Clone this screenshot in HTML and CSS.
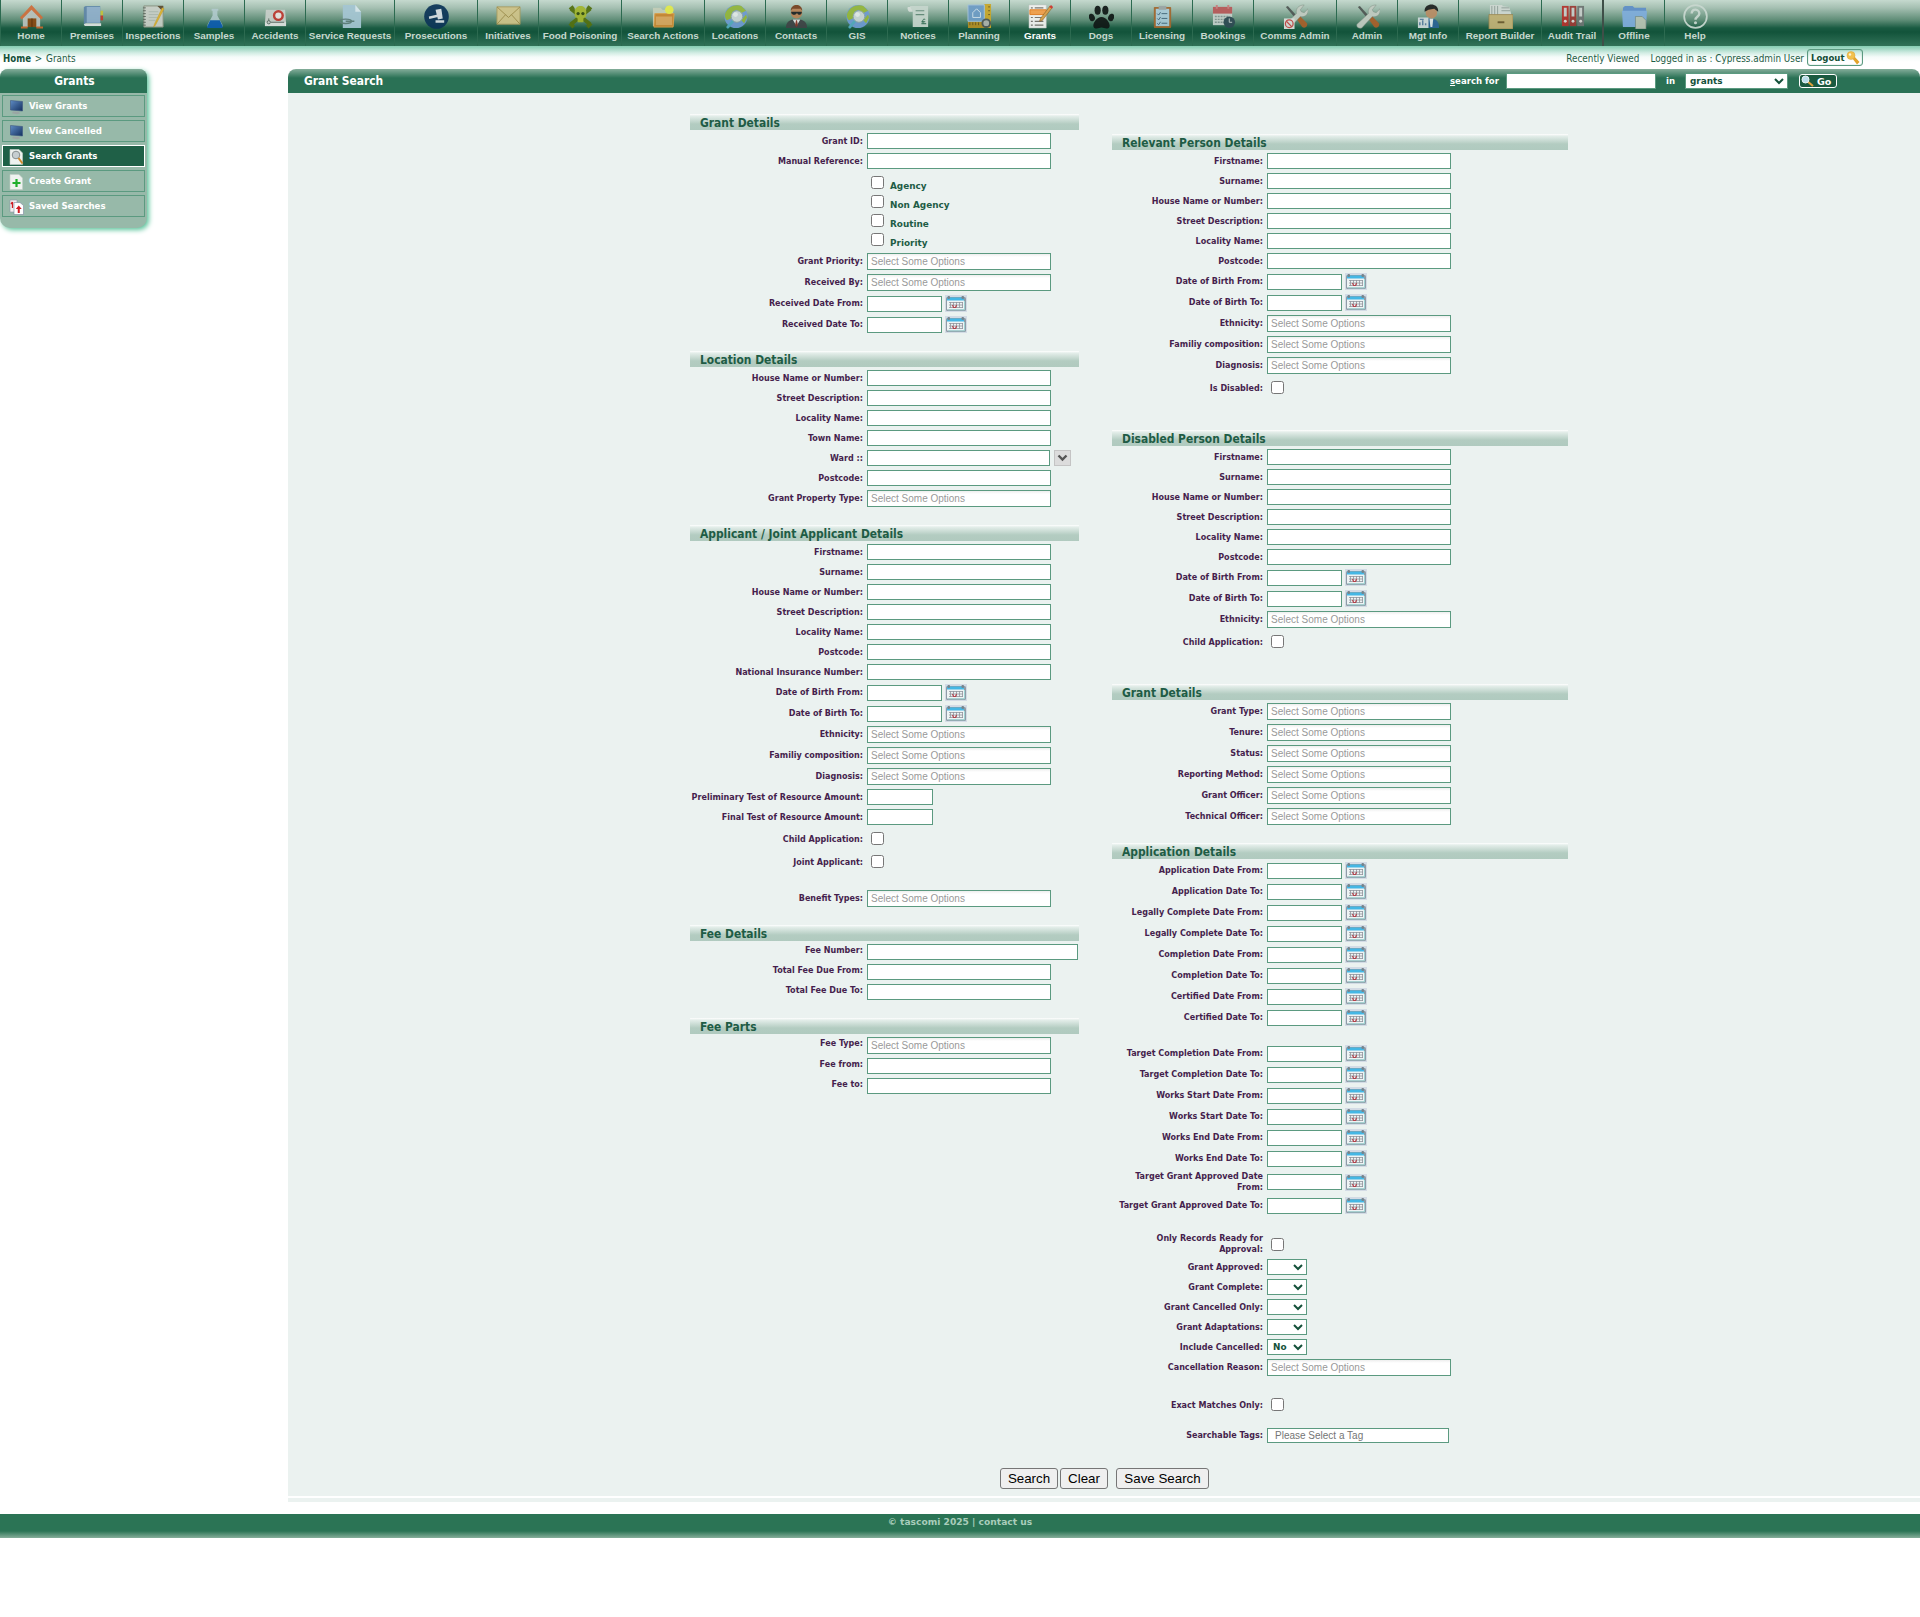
FILE: index.html
```html
<!DOCTYPE html>
<html lang="en">
<head>
<meta charset="utf-8">
<title>Grant Search</title>
<link rel="stylesheet" href="styles.css">
</head>
<body>
<svg class="defs" width="0" height="0">
<defs>
<linearGradient id="screen" x1="0" y1="0" x2="1" y2="1"><stop offset="0" stop-color="#5f8cc4"/><stop offset="1" stop-color="#14305f"/></linearGradient>
<symbol id="cal" viewBox="0 0 22 17">
<rect width="22" height="17" fill="#d3dbe5"/>
<rect x="1" y="2" width="20" height="14" rx="1.500" fill="#8f9ca6"/>
<rect x="2" y="3" width="17" height="11.500" fill="#eef3f4"/>
<rect x="2" y="2.500" width="17" height="3" fill="#45b7e4"/>
<rect x="2.500" y="1" width="2.500" height="3" rx="1" fill="#77848c"/><rect x="16.500" y="1" width="2.500" height="3" rx="1" fill="#77848c"/>
<path d="M4 7.500h14M4 10h14M4 12.500h14M5.500 7v6M8.500 7v6M11.500 7v6M14.500 7v6M17.500 7v6" stroke="#8f949c" stroke-width=".8"/>
<path d="M7.500 10l1 2.500h2l1-2.500" fill="none" stroke="#b5404a" stroke-width="1.100"/>
<path d="M19.500 6v8.800H3" fill="none" stroke="#9ed3d3"/>
</symbol>
<symbol id="globe" viewBox="0 0 26 26">
<circle cx="13.500" cy="13" r="12" fill="#6f9bd2"/><path d="M2 11C4 3 13 0 19 2l5 5-6 3-4-4-4 2-2 7-4 2c-2-2-2-4-2-6zM24 11l1 3-3 6-3-3z" fill="#93b63b"/>
<path d="M10 18l-5 6" stroke="#54aac0" stroke-width="3" stroke-linecap="round"/><circle cx="14.500" cy="13" r="6" fill="#c9d6d6" stroke="#8fa5a6"/><circle cx="13" cy="11" r="2.500" fill="#e4ebea"/>
</symbol>
<symbol id="tools" viewBox="0 0 26 26">
<path d="M3 3l2-1 10 11-2 2z" fill="#4f5653"/><path d="M13 14l3-3 9 9c1 3-2 6-5 4z" fill="#a8602a"/>
<path d="M2 21L14 10c-1-5 2-9 8-9l-4 5 1 2 3 1 4-4c1 6-3 9-8 8L7 25c-3 1-6-1-5-4z" fill="#c2ccc2" stroke="#7d8c82" stroke-width=".5"/>
</symbol>
<symbol id="monitor" viewBox="0 0 15 16">
<path d="M1.500 1.500l12 1v9.500l-12-1z" fill="url(#screen)" stroke="#3c557f" stroke-width=".6"/><path d="M4 12.500h6l1 2-3 .8-5-1z" fill="#9ba5a4"/>
</symbol>
<symbol id="page" viewBox="0 0 15 16"><path d="M1 .5h9l3.500 3.500v11.500H1z" fill="#eef2ef" stroke="#c3cec8" stroke-width=".6"/></symbol>
</defs>
</svg>

<nav class="nav">
<a class="nav-item"><svg class="nav-icon" viewBox="0 0 26 26"><path d="M4 13L13 4l9 9v11H4z" fill="#b9c2bd"/><path d="M1 14L13 1l12 13-2 2L13 6 3 16z" fill="#cf6f3c"/><rect x="9" y="15" width="9" height="9" fill="#8a4a12"/><path d="M13.500 15v9" stroke="#5d2e08"/><path d="M2 24.500h7M18 24.500h7" stroke="#c9682f" stroke-width="2"/></svg>Home</a>
<a class="nav-item"><svg class="nav-icon" viewBox="0 0 26 26"><path d="M21 7h3v5h-3z" fill="#c2c23a"/><path d="M21 12h3v5h-3z" fill="#c23a2a"/><path d="M4 3l2-1h15v18H6l-2 1z" fill="#5f86a8"/><path d="M4 21l2-1h16v3H6c-1 0-2-1-2-2z" fill="#dfe4e2"/><rect x="7" y="3" width="14" height="16.500" fill="#8fafcb"/></svg>Premises</a>
<a class="nav-item"><svg class="nav-icon" viewBox="0 0 26 26"><path d="M3 2h20v22H3z" fill="#c9cfc7" stroke="#87917f"/><path d="M17 2h6v6z" fill="#5b4b30"/><path d="M8 8h10M8 11h10M8 14h9M8 17h7" stroke="#a9b3aa" stroke-width=".8"/><path d="M2 4h3M2 7h3M2 10h3M2 13h3M2 16h3M2 19h3M2 22h3" stroke="#5c665d"/><path d="M24 5l-9 17-2 2 1-3 8-17z" fill="#e2b42f" stroke="#c59a28" stroke-width=".5"/></svg>Inspections</a>
<a class="nav-item"><svg class="nav-icon" viewBox="0 0 26 26"><path d="M10 5h7v2h-1v5l5 9c1 2 0 4-2 4H8c-2 0-3-2-2-4l5-9V7h-1z" fill="#b4ccd0" opacity=".9"/><path d="M8.500 17h10l2.500 5c1 2 0 3-1 3H7c-2 0-2-1-1-3z" fill="#0d5cae"/></svg>Samples</a>
<a class="nav-item"><svg class="nav-icon" viewBox="0 0 26 26"><path d="M3 6h20l1 14H2z" fill="#c8cfca"/><path d="M2 19h22v4H2z" fill="#e0e4e1"/><circle cx="16" cy="12" r="4.500" fill="#e9e5e2" stroke="#c03a32" stroke-width="2.500"/><path d="M8 19h14M6 15v3" stroke="#5f6d66"/><circle cx="6" cy="19" r="1.700" fill="#c8cfca" stroke="#5f6d66"/></svg>Accidents</a>
<a class="nav-item wide-xl"><svg class="nav-icon" viewBox="0 0 26 26"><path d="M5 1h13l6 7v17H5z" fill="#a5c6d3"/><path d="M18 1v7h6z" fill="#d8e7ec"/><path d="M2 18c0-3 12-3 12 0s-12 3-12 0zM8 18h9" fill="none" stroke="#5f7f7c" stroke-width="1.500"/></svg>Service Requests</a>
<a class="nav-item wide"><svg class="nav-icon" viewBox="0 0 26 26"><circle cx="13" cy="13" r="12.800" fill="#0c3558"/><path d="M12 6l6-1 1.500 10-5 1z" fill="#d5dde2"/><path d="M5 13l9-2 .5 2.500-9 2zM12 17h9v2.500h-9z" fill="#d5dde2"/></svg>Prosecutions</a>
<a class="nav-item"><svg class="nav-icon" viewBox="0 0 26 26"><path d="M1 3h24v18H1z" fill="#d0c489" stroke="#a99c5f"/><path d="M1 3l12 11L25 3M1 21l9-10M25 21l-9-10" fill="none" stroke="#a08f4c"/></svg>Initiatives</a>
<a class="nav-item wide"><svg class="nav-icon" viewBox="0 0 26 26"><path d="M3 5l20 16M23 5L3 21M2 6l4-3M24 6l-4-3M2 20l4 4M24 20l-4 4" stroke="#53700f" stroke-width="4"/><path d="M7 8c0-8 12-8 12 0v5l-3 2v4h-6v-4l-3-2z" fill="#a2b62e"/><circle cx="10.500" cy="10" r="1.700" fill="#314a0e"/><circle cx="15.500" cy="10" r="1.700" fill="#314a0e"/></svg>Food Poisoning</a>
<a class="nav-item wide"><svg class="nav-icon" viewBox="0 0 26 26"><path d="M2 4h8l2 2h11v17H2z" fill="#c4ceb8"/><path d="M4 10h20l-1 14H3z" fill="#c9862f" stroke="#dfa04a"/><path d="M5 13h17v9H5z" fill="#dba75e"/><circle cx="19" cy="6" r="4.500" fill="#e9ee3f" opacity=".9"/></svg>Search Actions</a>
<a class="nav-item"><svg class="nav-icon"><use href="#globe"/></svg>Locations</a>
<a class="nav-item"><svg class="nav-icon" viewBox="0 0 26 26"><path d="M2 25c0-6 3-8 7-9h8c4 1 7 3 7 9z" fill="#3f4446"/><path d="M9 16l4 7 4-7z" fill="#dfe3e0"/><path d="M12.500 17h1l1 5-1.500 2-1.500-2z" fill="#873529"/><circle cx="13" cy="9" r="6" fill="#b78357"/><path d="M7 7c0-8 12-8 12 0l-2-2H9z" fill="#774220"/><path d="M7.500 8h11v1c-1 3-4 3-5 0-1 3-5 3-6 0z" fill="#1d2425"/></svg>Contacts</a>
<a class="nav-item"><svg class="nav-icon"><use href="#globe"/></svg>GIS</a>
<a class="nav-item"><svg class="nav-icon" viewBox="0 0 26 26"><path d="M2 3h5v5H4c-2 0-3-4-2-5z" fill="#d5ded8"/><path d="M4 2h19v22H7V8z" fill="#c6d6cd"/><path d="M10 7h9M10 11h9" stroke="#648a79" stroke-width="1.200"/><path d="M20 16c-3-1-3 2-2 4m-2-1.500h4m-4 2h5" fill="none" stroke="#29664c"/></svg>Notices</a>
<a class="nav-item"><svg class="nav-icon" viewBox="0 0 26 26"><path d="M18 0h7v25h-7z" fill="#c9a72a"/><path d="M1 18h18v7H1z" fill="#b28f25"/><path d="M1 1h17v17H1z" fill="#6d9cc6" stroke="#a7c4da"/><path d="M6 9l4-4 4 4v5H6z" fill="none" stroke="#d0e1ec"/><path d="M3 19v3M6 19v3M9 19v3M12 19v3M22 3h2M22 7h2M22 11h2" stroke="#6f5a1c"/><circle cx="20" cy="20" r="4" fill="#aeb3ad" stroke="#505956" stroke-width="2"/></svg>Planning</a>
<a class="nav-item active"><svg class="nav-icon" viewBox="0 0 26 26"><path d="M1 1h18v24H1z" fill="#f4f4f2" stroke="#c2c2c0" stroke-width=".5"/><path d="M2 6h17v5H2z" fill="#f5a04a" stroke="#e67c1c"/><path d="M3 4h2M7 4h9M3 14h2M7 14h9M3 18h2M7 18h9M3 22h2M7 22h9" stroke="#77736f" stroke-width="1.200"/><path d="M23 2l2 2-10 13-3 1 1-3z" fill="#dba049" stroke="#8a5a1c" stroke-width=".6"/><path d="M22 3l2-2 2 2-1 2z" fill="#d0342c"/></svg>Grants</a>
<a class="nav-item"><svg class="nav-icon" viewBox="0 0 26 26"><g fill="#101816"><ellipse cx="9" cy="6.500" rx="3.200" ry="4.800"/><ellipse cx="17" cy="6.500" rx="3.200" ry="4.800"/><ellipse cx="3" cy="14" rx="3" ry="4" transform="rotate(-20 3 14)"/><ellipse cx="23" cy="14" rx="3" ry="4" transform="rotate(20 23 14)"/><path d="M13 13.500c5 0 8.500 6 8.500 9 0 4-5 3-8.500 2-3.500 1-8.500 2-8.500-2 0-3 3.500-9 8.500-9z"/></g></svg>Dogs</a>
<a class="nav-item"><svg class="nav-icon" viewBox="0 0 26 26"><rect x="4" y="3" width="18" height="22" rx="1" fill="#a2672e"/><path d="M6 5h14v18H6z" fill="#a9cbd8"/><path d="M9 2h8v4H9z" fill="#9aa5a4"/><path d="M7.500 10l1.500 1.500 2-3M7.500 15l1.500 1.500 2-3M7.500 20l1.500 1.500 2-3M12 10h6M12 15h6M12 20h6" fill="none" stroke="#42667a"/></svg>Licensing</a>
<a class="nav-item"><svg class="nav-icon" viewBox="0 0 26 26"><path d="M2 3h20v19H2z" fill="#c4d0ca"/><path d="M2 3h20v7H2z" fill="#b75858"/><path d="M6 1v4M18 1v4" stroke="#c97b7b" stroke-width="2"/><path d="M4 13h15M4 16h15M4 19h15" stroke="#829590" stroke-width="1.500" stroke-dasharray="2 1"/><circle cx="19" cy="19" r="6" fill="#2f4b54"/><path d="M19 15v4h3" fill="none" stroke="#c4d0ca"/></svg>Bookings</a>
<a class="nav-item wide"><svg class="nav-icon" viewBox="0 0 26 26"><use href="#tools"/><path d="M1 15h11v11H1z" fill="#dbe1dc"/><circle cx="6.500" cy="20.500" r="4" fill="none" stroke="#c74a48" stroke-width="1.300"/><path d="M3.500 18l6 6" stroke="#c74a48" stroke-width="1.300"/></svg>Comms Admin</a>
<a class="nav-item"><svg class="nav-icon"><use href="#tools"/></svg>Admin</a>
<a class="nav-item"><svg class="nav-icon" viewBox="0 0 26 26"><path d="M7 25c0-8 3-10 8-10s9 2 9 10z" fill="#2c6596"/><path d="M14 15h4l-1 9h-2z" fill="#dfe8ea"/><circle cx="16" cy="9" r="6" fill="#b98d65"/><path d="M9 8c-1-10 15-10 14 0l-4-3-6 1z" fill="#1e2120"/><path d="M2 14h11v11H2z" fill="#cfdadb"/><path d="M4 22v-3M7 22v-5M10 22v-2M4 16h4" stroke="#5c80a0" stroke-width="1.500"/></svg>Mgt Info</a>
<a class="nav-item wide"><svg class="nav-icon" viewBox="0 0 26 26"><path d="M2 1h13v12H2zM14 2l8 1 3 10H14z" fill="#cfd8d2"/><path d="M4 2v9M7 2v9M10 2v9M14 4h8M14 7h9" stroke="#8f9e97"/><path d="M1 11h25v15H1z" fill="#c2b276" stroke="#99834a" stroke-width=".8"/><rect x="10" y="18" width="7" height="2" fill="#6e5c30"/></svg>Report Builder</a>
<a class="nav-item"><svg class="nav-icon" viewBox="0 0 26 26"><path d="M2 2h7v21H2z" fill="#b3322c"/><path d="M10 2h7v21h-7z" fill="#9b3a34"/><path d="M18 2h7v21h-7z" fill="#6d7472"/><path d="M4 4h3v9H4zM12 4h3v9h-3zM20 4h3v9h-3z" fill="#c6cdc9"/><circle cx="5.500" cy="18" r="1.500" fill="#d8d8d4"/><circle cx="13.500" cy="18" r="1.500" fill="#d8d8d4"/><circle cx="21.500" cy="18" r="1.500" fill="#d8d8d4"/></svg>Audit Trail</a>
<a class="nav-item offline"><svg class="nav-icon" viewBox="0 0 26 26"><path d="M1 4l2-2h8l2 2h12v19H1z" fill="#5f8fc8"/><path d="M0 7h26l-1 17H1z" fill="#7faddc"/><path d="M14 13h7l4 4v9H14z" fill="#b8c4b4" stroke="#6b7d72" stroke-width=".6"/></svg>Offline</a>
<a class="nav-item"><svg class="nav-icon" viewBox="0 0 26 26"><circle cx="13" cy="13" r="11.800" fill="none" stroke="#c9d8d0" stroke-width="1.800"/><path d="M9 10c0-6 8-5 8 0 0 3-4 3-4 6.500" fill="none" stroke="#c9d8d0" stroke-width="2.500"/><circle cx="13" cy="19.500" r="1.600" fill="#c9d8d0"/></svg>Help</a>
</nav>

<div class="topline">
<div class="crumbs"><b>Home</b> &gt; Grants</div>
<div class="user"><span>Recently Viewed</span><span>Logged in as : Cypress.admin User</span><a class="logout">Logout<svg width="15" height="15" viewBox="0 0 15 15"><path d="M7 8l2-2 5.500 6-2.500 2.500z" fill="#e3a32a"/><circle cx="6" cy="5.500" r="4" fill="#f2c14e" stroke="#d9a136" stroke-width=".5"/><circle cx="5" cy="4.500" r="1.200" fill="#fff4cf"/></svg></a></div>
</div>

<div class="main">
<aside class="side">
<h2 class="side-title">Grants</h2>
<a class="side-item"><svg><use href="#monitor"/></svg>View Grants</a>
<a class="side-item"><svg><use href="#monitor"/></svg>View Cancelled</a>
<a class="side-item current"><svg viewBox="0 0 15 16"><use href="#page"/><circle cx="7" cy="6" r="3.800" fill="#c6ced0" stroke="#868f90"/><path d="M9.500 9l4 5.500" stroke="#d08a2c" stroke-width="2"/></svg>Search Grants</a>
<a class="side-item"><svg viewBox="0 0 15 16"><use href="#page"/><path d="M7.500 5v8M3.500 9h8" stroke="#1fae2c" stroke-width="2.200"/></svg>Create Grant</a>
<a class="side-item"><svg viewBox="0 0 15 16"><path d="M1 1h7v12H1z" fill="#f4eeee" stroke="#8c94a8" stroke-width=".6"/><path d="M3.500 3v6M2 5l1.500-2" stroke="#d01c24" stroke-width="1.300"/><path d="M5 3.500h6l3.500 3v9H5z" fill="#fff" stroke="#7c86a0" stroke-width=".6"/><path d="M9.750 6.500l3 3.500h-2v4h-2v-4h-2z" fill="#d01c24"/></svg>Saved Searches</a>
</aside>

<section class="panel">
<header class="panel-head">
<h1>Grant Search</h1>
<div class="quick"><label><u>s</u>earch for</label><input class="q-input"><span class="q-in">in</span><select class="q-select"><option>grants</option></select><a class="go"><svg width="14" height="13" viewBox="0 0 14 13"><path d="M6 6l6 5" stroke="#dda13a" stroke-width="2.200"/><circle cx="4.500" cy="4.500" r="3.500" fill="#b9dcea" stroke="#e9f4f5"/></svg>Go</a></div>
</header>

<form class="form">
<div class="cols">
<div class="col left">
<h3>Grant Details</h3>
<div class="row"><label>Grant ID:</label><input class="txt"></div>
<div class="row"><label>Manual Reference:</label><input class="txt"></div>
<div class="checks">
<div class="check"><input type="checkbox"><span>Agency</span></div>
<div class="check"><input type="checkbox"><span>Non Agency</span></div>
<div class="check"><input type="checkbox"><span>Routine</span></div>
<div class="check"><input type="checkbox"><span>Priority</span></div>
</div>
<div class="row multi"><label>Grant Priority:</label><div class="chosen">Select Some Options</div></div>
<div class="row multi"><label>Received By:</label><div class="chosen">Select Some Options</div></div>
<div class="row date"><label>Received Date From:</label><input class="txt"><svg><use href="#cal"/></svg></div>
<div class="row date"><label>Received Date To:</label><input class="txt"><svg><use href="#cal"/></svg></div>

<h3>Location Details</h3>
<div class="row"><label>House Name or Number:</label><input class="txt"></div>
<div class="row"><label>Street Description:</label><input class="txt"></div>
<div class="row"><label>Locality Name:</label><input class="txt"></div>
<div class="row"><label>Town Name:</label><input class="txt"></div>
<div class="row ward"><label>Ward ::</label><input class="txt"><span class="drop"><svg width="11" height="8" viewBox="0 0 11 8"><path d="M1.500 1.500l4 4 4-4" fill="none" stroke="#555" stroke-width="2.400"/></svg></span></div>
<div class="row"><label>Postcode:</label><input class="txt"></div>
<div class="row multi"><label>Grant Property Type:</label><div class="chosen">Select Some Options</div></div>

<h3>Applicant / Joint Applicant Details</h3>
<div class="row"><label>Firstname:</label><input class="txt"></div>
<div class="row"><label>Surname:</label><input class="txt"></div>
<div class="row"><label>House Name or Number:</label><input class="txt"></div>
<div class="row"><label>Street Description:</label><input class="txt"></div>
<div class="row"><label>Locality Name:</label><input class="txt"></div>
<div class="row"><label>Postcode:</label><input class="txt"></div>
<div class="row"><label>National Insurance Number:</label><input class="txt"></div>
<div class="row date"><label>Date of Birth From:</label><input class="txt"><svg><use href="#cal"/></svg></div>
<div class="row date"><label>Date of Birth To:</label><input class="txt"><svg><use href="#cal"/></svg></div>
<div class="row multi"><label>Ethnicity:</label><div class="chosen">Select Some Options</div></div>
<div class="row multi"><label>Familiy composition:</label><div class="chosen">Select Some Options</div></div>
<div class="row multi"><label>Diagnosis:</label><div class="chosen">Select Some Options</div></div>
<div class="row money"><label>Preliminary Test of Resource Amount:</label><input class="txt"></div>
<div class="row money"><label>Final Test of Resource Amount:</label><input class="txt"></div>
<div class="row tick"><label>Child Application:</label><input type="checkbox"></div>
<div class="row tick"><label>Joint Applicant:</label><input type="checkbox"></div>
<div class="row multi spaced"><label>Benefit Types:</label><div class="chosen">Select Some Options</div></div>

<h3>Fee Details</h3>
<div class="row raised long"><label>Fee Number:</label><input class="txt"></div>
<div class="row raised"><label>Total Fee Due From:</label><input class="txt"></div>
<div class="row raised"><label>Total Fee Due To:</label><input class="txt"></div>

<h3>Fee Parts</h3>
<div class="row multi raised"><label>Fee Type:</label><div class="chosen">Select Some Options</div></div>
<div class="row raised"><label>Fee from:</label><input class="txt"></div>
<div class="row raised"><label>Fee to:</label><input class="txt"></div>
</div>

<div class="col right">
<h3>Relevant Person Details</h3>
<div class="row"><label>Firstname:</label><input class="txt"></div>
<div class="row"><label>Surname:</label><input class="txt"></div>
<div class="row"><label>House Name or Number:</label><input class="txt"></div>
<div class="row"><label>Street Description:</label><input class="txt"></div>
<div class="row"><label>Locality Name:</label><input class="txt"></div>
<div class="row"><label>Postcode:</label><input class="txt"></div>
<div class="row date"><label>Date of Birth From:</label><input class="txt"><svg><use href="#cal"/></svg></div>
<div class="row date"><label>Date of Birth To:</label><input class="txt"><svg><use href="#cal"/></svg></div>
<div class="row multi"><label>Ethnicity:</label><div class="chosen">Select Some Options</div></div>
<div class="row multi"><label>Familiy composition:</label><div class="chosen">Select Some Options</div></div>
<div class="row multi"><label>Diagnosis:</label><div class="chosen">Select Some Options</div></div>
<div class="row tick last"><label>Is Disabled:</label><input type="checkbox"></div>

<h3>Disabled Person Details</h3>
<div class="row"><label>Firstname:</label><input class="txt"></div>
<div class="row"><label>Surname:</label><input class="txt"></div>
<div class="row"><label>House Name or Number:</label><input class="txt"></div>
<div class="row"><label>Street Description:</label><input class="txt"></div>
<div class="row"><label>Locality Name:</label><input class="txt"></div>
<div class="row"><label>Postcode:</label><input class="txt"></div>
<div class="row date"><label>Date of Birth From:</label><input class="txt"><svg><use href="#cal"/></svg></div>
<div class="row date"><label>Date of Birth To:</label><input class="txt"><svg><use href="#cal"/></svg></div>
<div class="row multi"><label>Ethnicity:</label><div class="chosen">Select Some Options</div></div>
<div class="row tick last"><label>Child Application:</label><input type="checkbox"></div>

<h3>Grant Details</h3>
<div class="row multi"><label>Grant Type:</label><div class="chosen">Select Some Options</div></div>
<div class="row multi"><label>Tenure:</label><div class="chosen">Select Some Options</div></div>
<div class="row multi"><label>Status:</label><div class="chosen">Select Some Options</div></div>
<div class="row multi"><label>Reporting Method:</label><div class="chosen">Select Some Options</div></div>
<div class="row multi"><label>Grant Officer:</label><div class="chosen">Select Some Options</div></div>
<div class="row multi"><label>Technical Officer:</label><div class="chosen">Select Some Options</div></div>

<h3>Application Details</h3>
<div class="row date"><label>Application Date From:</label><input class="txt"><svg><use href="#cal"/></svg></div>
<div class="row date"><label>Application Date To:</label><input class="txt"><svg><use href="#cal"/></svg></div>
<div class="row date"><label>Legally Complete Date From:</label><input class="txt"><svg><use href="#cal"/></svg></div>
<div class="row date"><label>Legally Complete Date To:</label><input class="txt"><svg><use href="#cal"/></svg></div>
<div class="row date"><label>Completion Date From:</label><input class="txt"><svg><use href="#cal"/></svg></div>
<div class="row date"><label>Completion Date To:</label><input class="txt"><svg><use href="#cal"/></svg></div>
<div class="row date"><label>Certified Date From:</label><input class="txt"><svg><use href="#cal"/></svg></div>
<div class="row date"><label>Certified Date To:</label><input class="txt"><svg><use href="#cal"/></svg></div>
<div class="row date spaced"><label>Target Completion Date From:</label><input class="txt"><svg><use href="#cal"/></svg></div>
<div class="row date"><label>Target Completion Date To:</label><input class="txt"><svg><use href="#cal"/></svg></div>
<div class="row date"><label>Works Start Date From:</label><input class="txt"><svg><use href="#cal"/></svg></div>
<div class="row date"><label>Works Start Date To:</label><input class="txt"><svg><use href="#cal"/></svg></div>
<div class="row date"><label>Works End Date From:</label><input class="txt"><svg><use href="#cal"/></svg></div>
<div class="row date"><label>Works End Date To:</label><input class="txt"><svg><use href="#cal"/></svg></div>
<div class="row date double"><label>Target Grant Approved Date<br>From:</label><input class="txt"><svg><use href="#cal"/></svg></div>
<div class="row date"><label>Target Grant Approved Date To:</label><input class="txt"><svg><use href="#cal"/></svg></div>
<div class="row tick double spaced"><label>Only Records Ready for<br>Approval:</label><input type="checkbox"></div>
<div class="row"><label>Grant Approved:</label><select class="yn"><option></option></select></div>
<div class="row"><label>Grant Complete:</label><select class="yn"><option></option></select></div>
<div class="row"><label>Grant Cancelled Only:</label><select class="yn"><option></option></select></div>
<div class="row"><label>Grant Adaptations:</label><select class="yn"><option></option></select></div>
<div class="row"><label>Include Cancelled:</label><select class="yn"><option>No</option></select></div>
<div class="row multi"><label>Cancellation Reason:</label><div class="chosen">Select Some Options</div></div>
<div class="row tick spaced"><label>Exact Matches Only:</label><input type="checkbox"></div>
<div class="row tags"><label>Searchable Tags:</label><div class="chosen">Please Select a Tag</div></div>
</div>
</div>
<div class="buttons"><button type="button">Search</button><button type="button">Clear</button><button type="button" class="save">Save Search</button></div>
</form>
</section>
</div>

<footer class="footer">© tascomi 2025 | contact us</footer>
</body>
</html>
```
FILE: styles.css
```css
* { box-sizing: border-box; }
body { margin: 0; background: #fff; font-family: "DejaVu Sans Condensed", "DejaVu Sans", sans-serif; font-stretch: condensed; color: #1f5d46; }
.defs { position: absolute; }

/* top navigation */
.nav { display: flex; height: 46px; background: linear-gradient(#c5d9ce 0, #a4bfb1 8px, #5f8d77 20px, #1a5b42 28px, #12533a 32px, #327258 46px); }
.nav-item { width: 61px; border-left: 1px solid #2c6a50; display: flex; flex-direction: column; align-items: center; padding-top: 4px; font: bold 9.9px/12px "Liberation Sans", Arial, sans-serif; color: #c6d8ce; white-space: nowrap; }
.nav-item.wide { width: 83px; }
.nav-item.wide-xl { width: 89px; }
.nav-item.active { color: #fff; }
.nav-item.offline { width: 62px; border-left: 2px solid #3f4f48; }
.nav-icon { width: 25px; height: 25px; margin-bottom: 1px; opacity: .93; flex: none; }

/* breadcrumbs and session links */
.topline { display: flex; justify-content: space-between; height: 23px; background: linear-gradient(#86ccb2 0, #a5d9c6 3px, #d3ede4 7px, #f5fbf9 11px, #fff 16px); font-size: 9.85px; line-height: 25px; }
.crumbs { padding-left: 3px; word-spacing: 1px; }
.crumbs b { font-size: 9.6px; color: #14513a; }
.user { display: flex; padding-right: 57px; }
.user span { margin-right: 11px; }
.user span + span { margin-right: 3px; }
.logout { display: flex; align-items: center; justify-content: space-between; width: 56px; height: 17px; margin-top: 3px; padding: 0 2px 0 3px; border: 1px solid #5b9a80; border-radius: 3px; box-shadow: inset 0 0 1px #5b9a80; font-weight: bold; font-size: 9.5px; line-height: 15px; color: #124e37; }

.main { display: flex; align-items: flex-start; justify-content: space-between; }

/* section menu */
.side { width: 147px; height: 159px; border-radius: 8px 8px 10px 10px; background: #97b9a9; box-shadow: 2px 2px 5px #5cc49c; }
.side-title { margin: 0 0 2px; height: 24px; border-radius: 8px 8px 0 0; background: linear-gradient(#84ad9a 0, #2a7155 9px); color: #fff; font-size: 11.9px; line-height: 24px; text-align: center; padding-left: 2px; }
.side-item { display: flex; align-items: flex-start; height: 22px; margin: 0 2px 3px; border: 1px solid #5b9a80; padding: 3px 0 0 6px; color: #fff; font-weight: bold; font-size: 9.52px; line-height: 13px; }
.side-item svg { width: 15px; height: 16px; margin-right: 5px; }
.side-item.current { background: #1f6047; border-color: #fff; }

/* content panel */
.panel { width: 1632px; border-bottom: 4px solid #ebf2f0; }
.panel-head { display: flex; justify-content: space-between; height: 24px; border-radius: 8px 8px 0 0; background: linear-gradient(#84ad9a 0, #2a7155 9px); color: #fff; }
.panel-head h1 { margin: 0 0 0 16px; font-size: 11.9px; line-height: 24px; }
.quick { display: flex; align-items: flex-start; width: 470px; font-weight: bold; font-size: 9.52px; line-height: 23px; }
.quick label { width: 56px; }
.q-input { width: 150px; height: 16px; margin-top: 4px; border: 1px solid #5b9a80; background: #fff; }
.q-in { margin-left: 10px; width: 19px; }
.q-select { width: 103px; height: 16px; margin-top: 4px; border: 1px solid #5b9a80; padding: 0; background-color: #fff; color: #14513a; font: bold 8.9px "DejaVu Sans", sans-serif; border-radius: 0; }
.go { display: flex; align-items: center; width: 38px; height: 14px; margin: 5px 0 0 11px; padding-left: 1px; gap: 2px; border: 1px solid #fff; border-radius: 3px; background: #1b5a40; font: bold 9.5px/13px "DejaVu Sans", sans-serif; }

/* search form */
.form { height: 1403px; background: #ebf2f0; margin: 0 0 2px; }
.cols { display: flex; gap: 33px; padding: 0 0 0 402px; height: 1375px; }
.col { --label: 173px; }
.left { width: 389px; padding-top: 21px; }
.right { width: 456px; padding-top: 41px; --label: 151px; }
.col h3 { height: 16px; margin: 16px 0 1px; padding-left: 10px; font-size: 11.9px; line-height: 18px; color: #1e5c45; background: linear-gradient(#fff 0, #e4eeea 2px, #b3ccc1 10px, #b0cabf 16px); }
.col h3:first-child { margin-top: 0; }

.row { display: flex; align-items: flex-start; height: 20px; }
.row label { width: var(--label); margin-right: 4px; text-align: right; white-space: nowrap; font-weight: bold; font-size: 8.95px; line-height: 21px; color: #451f4d; }
.txt { width: 184px; height: 16px; margin: 2px 0 0; padding: 0; border: 1px solid #5b9a80; background: #fff; }
.multi { height: 21px; }
.chosen { width: 184px; height: 17px; margin-top: 2px; padding-left: 3px; border: 1px solid #5b9a80; background: linear-gradient(#eee 0, #fff 3px); font: 10px/16px "Liberation Sans", Arial, sans-serif; color: #999; }
.date { height: 21px; }
.date .txt { width: 75px; margin-top: 3px; }
.date svg { width: 22px; height: 17px; margin: 2px 0 0 3px; }
.money .txt { width: 66px; }
.long .txt { width: 211px; }
.ward .txt { width: 183px; }
.drop { display: flex; align-items: center; justify-content: center; width: 17px; height: 16px; margin: 2px 0 0 4px; border: 1px solid #c4c4c4; background: #dcdcdc; }
.raised label { line-height: 16px; }
.tick { height: 23px; }
.tick label { line-height: 24px; }
input[type="checkbox"] { width: 13px; height: 13px; margin: 5px 0 0 4px; }
.tick.last { margin-bottom: 31px; }
.spaced { margin-top: 15px; }
.double { height: 26px; }
.double label { line-height: 11px; padding-top: 2px; }
.date.double .txt { margin-top: 5px; }
.date.double svg { margin-top: 5px; }
.tick.double input { margin-top: 7px; }
.checks { padding: 0 0 4px 177px; }
.check { display: flex; height: 19px; }
.check span { margin-left: 6px; font: bold 8.9px/31px "DejaVu Sans", sans-serif; color: #1e5c45; }
.yn { width: 40px; height: 16px; margin: 2px 0 0; padding: 0 0 0 1px; border: 1px solid #5b9a80; border-radius: 0; background-color: #fff; color: #14513a; font: bold 8.9px "DejaVu Sans", sans-serif; }
.tags { margin-top: 10px; }
.tags .chosen { width: 182px; height: 15px; padding-left: 7px; line-height: 14px; color: #757575; background: #fff; }
.tags label { line-height: 19px; }

.buttons { display: flex; gap: 2px; padding-left: 712px; }
.buttons button { height: 21px; padding: 0; width: 58px; border: 1px solid #767676; border-radius: 3px; background: #efefef; color: #000; font: 13.33px "Liberation Sans", Arial, sans-serif; }
.buttons button:nth-child(2) { width: 48px; }
.buttons .save { width: 93px; margin-left: 6px; }

.footer { height: 24px; margin-top: 12px; background: linear-gradient(#2b7455 0, #2b7455 17px, #86ae9a 24px); color: #a9cdbb; font: bold 9.15px/16px "DejaVu Sans", sans-serif; text-align: center; }
```
